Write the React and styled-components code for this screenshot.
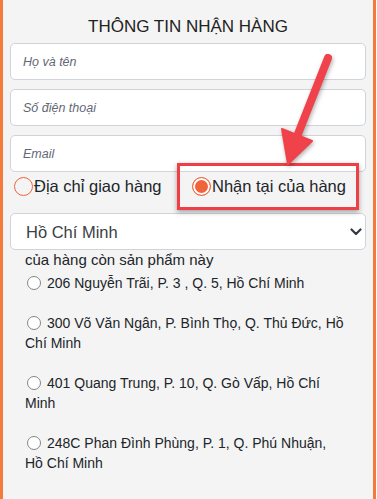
import styled, { createGlobalStyle } from 'styled-components';

const Global = createGlobalStyle`
  *, *::before, *::after { box-sizing: border-box; }
  body {
    margin: 0;
    background: #ffffff;
    font-family: "Liberation Sans", Arial, sans-serif;
  }
`;

const Page = styled.div`
  position: relative;
  width: 376px;
  height: 499px;
  padding: 16px 7px 0 7px;
  background: #f4f4f4;
  border-left: 3px solid #f47b3a;
  border-right: 3px solid #f47b3a;
  overflow: hidden;
`;

const Title = styled.h2`
  margin: 0 0 5px;
  font-size: 17px;
  line-height: 22px;
  font-weight: normal;
  text-align: center;
  color: #222222;
`;

const Fields = styled.div`
  display: flex;
  flex-direction: column;
  gap: 9px;
`;

const Input = styled.input`
  display: block;
  width: 100%;
  height: 37px;
  margin: 0;
  padding: 0 12px;
  border: 1px solid #ced4da;
  border-radius: 5px;
  background: #ffffff;
  font-family: inherit;
  font-size: 12.5px;
  &::placeholder {
    color: #5f6875;
    font-style: italic;
  }
`;

const ChoiceRow = styled.div`
  display: grid;
  grid-template-columns: 178px 1fr;
  align-items: center;
  height: 28px;
  margin-bottom: 13px;
`;

const Choice = styled.label`
  display: flex;
  align-items: center;
  padding-left: 4px;
  font-size: 16.5px;
  color: #212529;
  white-space: nowrap;
`;

const OrangeRadio = styled.input`
  appearance: none;
  width: 19px;
  height: 19px;
  margin: 0 1px 0 0;
  border: 1px solid #f0643c;
  border-radius: 50%;
  background: transparent;
  &:checked {
    background: #f0643c;
    box-shadow: inset 0 0 0 2px #ffffff;
  }
`;

const SelectWrap = styled.div`
  position: relative;
`;

const Select = styled.select`
  appearance: none;
  display: block;
  width: 100%;
  height: 37px;
  padding: 0 15px;
  border: 1px solid #ced4da;
  border-radius: 5px;
  background: #ffffff;
  font-family: inherit;
  font-size: 16.5px;
  color: #3a3f45;
`;

const Chevron = styled.svg`
  position: absolute;
  right: 4px;
  top: 15px;
  pointer-events: none;
`;

const StoreHeader = styled.div`
  padding-left: 15px;
  font-size: 15px;
  line-height: 20px;
  color: #212529;
`;

const StoreList = styled.div`
  padding: 3px 19px 0 15px;
`;

const Store = styled.label`
  display: block;
  margin-bottom: 20px;
  font-size: 14px;
  line-height: 20px;
  color: #212529;
`;

const GrayRadio = styled.input`
  appearance: none;
  display: inline-block;
  width: 14px;
  height: 14px;
  margin: 0 6px 0 2px;
  vertical-align: -2px;
  border: 1px solid #858585;
  border-radius: 50%;
  background: #ffffff;
`;

const Highlight = styled.div`
  position: absolute;
  left: 174px;
  top: 163px;
  width: 182px;
  height: 47px;
  border: 3px solid #ee3f46;
  box-shadow: 0 2px 5px rgba(0, 0, 0, 0.35);
  pointer-events: none;
`;

const Arrow = styled.svg`
  position: absolute;
  left: -3px;
  top: 0;
  pointer-events: none;
  filter: drop-shadow(1px 2px 2px rgba(0, 0, 0, 0.3));
`;

const stores = [
  '206 Nguyễn Trãi, P. 3 , Q. 5, Hồ Chí Minh',
  '300 Võ Văn Ngân, P. Bình Thọ, Q. Thủ Đức, Hồ Chí Minh',
  '401 Quang Trung, P. 10, Q. Gò Vấp, Hồ Chí Minh',
  '248C Phan Đình Phùng, P. 1, Q. Phú Nhuận, Hồ Chí Minh',
];

export default function App() {
  return (
    <>
      <Global />
      <Page>
        <Title>THÔNG TIN NHẬN HÀNG</Title>
        <Fields>
          <Input placeholder="Họ và tên" />
          <Input placeholder="Số điện thoại" />
          <Input placeholder="Email" />
        </Fields>
        <ChoiceRow>
          <Choice>
            <OrangeRadio type="radio" name="ship" />
            Địa chỉ giao hàng
          </Choice>
          <Choice>
            <OrangeRadio type="radio" name="ship" defaultChecked />
            Nhận tại của hàng
          </Choice>
        </ChoiceRow>
        <SelectWrap>
          <Select defaultValue="hcm">
            <option value="hcm">Hồ Chí Minh</option>
          </Select>
          <Chevron width="12" height="8" viewBox="0 0 12 8">
            <path d="M1.5 1.5 L6 6 L10.5 1.5" fill="none" stroke="#343a40" strokeWidth="2.2" strokeLinecap="round" strokeLinejoin="round" />
          </Chevron>
        </SelectWrap>
        <StoreHeader>của hàng còn sản phẩm này</StoreHeader>
        <StoreList>
          {stores.map((s) => (
            <Store key={s}>
              <GrayRadio type="radio" name="store" />
              {s}
            </Store>
          ))}
        </StoreList>
        <Highlight />
        <Arrow width="377" height="499" viewBox="0 0 377 499">
          <line x1="328" y1="58" x2="298" y2="134" stroke="#f0424a" strokeWidth="8" strokeLinecap="round" />
          <polygon points="282,129 312,141 288,164" fill="#f0424a" stroke="#f0424a" strokeWidth="2" strokeLinejoin="round" />
        </Arrow>
      </Page>
    </>
  );
}
